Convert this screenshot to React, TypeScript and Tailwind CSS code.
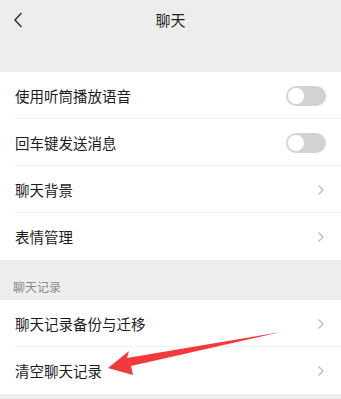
import React from "react";

const font = { fontFamily: '"Noto Sans CJK SC", "Noto Sans", sans-serif' };

function Toggle() {
  return (
    <div className="relative h-[20px] w-[40px] rounded-full bg-[#d2d2d2]">
      <div className="absolute left-[1px] top-[1px] h-[18px] w-[18px] rounded-full border border-[#d6d6d6] bg-white" />
    </div>
  );
}

function Chevron() {
  return (
    <svg width="8" height="12" viewBox="0 0 8 12" className="mr-[1px]">
      <path d="M1.5 1.5 L6 6 L1.5 10.5" fill="none" stroke="#b9b9b9" strokeWidth="1.3" />
    </svg>
  );
}

function Row({ label, right, last }: { label: string; right: React.ReactNode; last?: boolean }) {
  return (
    <div className="relative flex h-[47px] items-center justify-between pl-[15px] pr-[15px]">
      <span className="text-[14.5px] text-[#1c1c1c]">{label}</span>
      {right}
      {!last && <div className="absolute bottom-0 left-[15px] right-0 h-px bg-[#f1f1f1]" />}
    </div>
  );
}

export default function App() {
  return (
    <div className="relative h-[399px] w-[341px] overflow-hidden bg-[#ededed]" style={font}>
      <div className="relative flex h-[72px] items-start justify-center pt-[9px]">
        <svg width="12" height="18" viewBox="0 0 12 18" className="absolute left-[12px] top-[11px]">
          <path d="M9.5 2 L3 9 L9.5 16" fill="none" stroke="#333" strokeWidth="1.5" />
        </svg>
        <span className="text-[15px] text-[#1f1f1f]">聊天</span>
      </div>
      <div className="bg-white">
        <Row label="使用听筒播放语音" right={<Toggle />} />
        <Row label="回车键发送消息" right={<Toggle />} />
        <Row label="聊天背景" right={<Chevron />} />
        <Row label="表情管理" right={<Chevron />} last />
      </div>
      <div className="flex h-[40px] items-center pl-[13px] pt-[14px] text-[12px] text-[#8a8a8a]">聊天记录</div>
      <div className="bg-white">
        <Row label="聊天记录备份与迁移" right={<Chevron />} />
        <Row label="清空聊天记录" right={<Chevron />} last />
      </div>
      <svg className="pointer-events-none absolute left-0 top-0" width="341" height="399" viewBox="0 0 341 399">
        <polygon points="108,368 129,351 127,358 281,332 131,366 133,375" fill="#f23a3a" />
      </svg>
    </div>
  );
}
